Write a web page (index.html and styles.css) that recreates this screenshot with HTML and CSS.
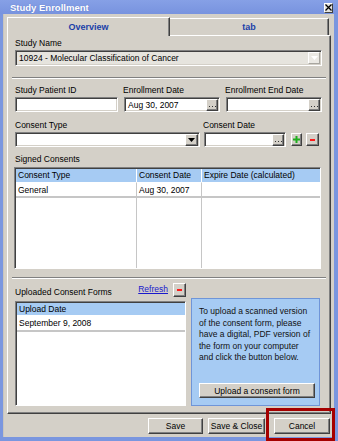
FILE: index.html
```html
<!DOCTYPE html>
<html>
<head>
<meta charset="utf-8">
<title>Study Enrollment</title>
<link rel="stylesheet" href="styles.css">
</head>
<body>
<div class="window">
  <div class="titlebar">
    <span class="title">Study Enrollment</span>
    <span class="close"><svg width="7" height="7" viewBox="0 0 7 7"><path d="M0.5 0.5 L6.5 6.5 M6.5 0.5 L0.5 6.5" stroke="#000" stroke-width="1.3"/></svg></span>
  </div>
  <div class="client">
    <div class="tabs">
      <div class="tab tab-active">Overview</div>
      <div class="tab tab-other">tab</div>
    </div>
    <div class="panel">
      <div class="label">Study Name</div>
      <div class="field-box select disabled">
        <span class="value">10924 - Molecular Classification of Cancer</span>
        <span class="drop drop-disabled"><svg width="7" height="4" viewBox="0 0 7 4"><path d="M0 0 H7 L3.5 4 Z" fill="#fff"/></svg></span>
      </div>
      <div class="sep sep-top"></div>

      <div class="row row-dates">
        <div class="field f-pid">
          <div class="label">Study Patient ID</div>
          <div class="field-box"></div>
        </div>
        <div class="field f-date">
          <div class="label">Enrollment Date</div>
          <div class="field-box"><span class="value">Aug 30, 2007</span><span class="dots"><svg width="7" height="1" viewBox="0 0 7 1"><rect x="0" width="1" height="1" fill="#333"/><rect x="3" width="1" height="1" fill="#333"/><rect x="6" width="1" height="1" fill="#333"/></svg></span></div>
        </div>
        <div class="field f-date">
          <div class="label">Enrollment End Date</div>
          <div class="field-box"><span class="value"></span><span class="dots"><svg width="7" height="1" viewBox="0 0 7 1"><rect x="0" width="1" height="1" fill="#333"/><rect x="3" width="1" height="1" fill="#333"/><rect x="6" width="1" height="1" fill="#333"/></svg></span></div>
        </div>
      </div>

      <div class="row row-consent">
        <div class="field f-ctype">
          <div class="label">Consent Type</div>
          <div class="field-box"><span class="value"></span><span class="drop"><svg width="7" height="4" viewBox="0 0 7 4"><path d="M0 0 H7 L3.5 4 Z" fill="#000"/></svg></span></div>
        </div>
        <div class="field f-cdate">
          <div class="label">Consent Date</div>
          <div class="field-box"><span class="value"></span><span class="dots"><svg width="7" height="1" viewBox="0 0 7 1"><rect x="0" width="1" height="1" fill="#333"/><rect x="3" width="1" height="1" fill="#333"/><rect x="6" width="1" height="1" fill="#333"/></svg></span></div>
        </div>
        <div class="mini mini-plus"><svg width="7" height="7" viewBox="0 0 7 7"><path d="M3.5 0 V7 M0 3.5 H7" stroke="#1fae1f" stroke-width="2"/></svg></div>
        <div class="mini mini-minus"><svg width="5" height="2" viewBox="0 0 5 2"><rect width="5" height="2" fill="#ff1a1a"/></svg></div>
      </div>

      <div class="label label-signed">Signed Consents</div>
      <div class="grid-table">
        <div class="th">Consent Type</div>
        <div class="th">Consent Date</div>
        <div class="th th-last">Expire Date (calculated)</div>
        <div class="td">General</div>
        <div class="td">Aug 30, 2007</div>
        <div class="td td-last"></div>
        <div class="tf"></div>
        <div class="tf"></div>
        <div class="tf tf-last"></div>
      </div>
      <div class="sep sep-mid"></div>

      <div class="uploads">
        <div class="uploads-left">
          <div class="uploads-head">
            <span class="uploads-label">Uploaded Consent Forms</span>
            <a class="refresh" href="#">Refresh</a>
            <div class="mini mini-minus mini-up"><svg width="5" height="2" viewBox="0 0 5 2"><rect width="5" height="2" fill="#ff1a1a"/></svg></div>
          </div>
          <div class="list">
            <div class="list-head">Upload Date</div>
            <div class="list-row">September 9, 2008</div>
          </div>
        </div>
        <div class="info">
          <p class="info-text">To upload a scanned version<br>of the consent form, please<br>have a digital, PDF version of<br>the form on your computer<br>and click the button below.</p>
          <div class="btn btn-upload">Upload a consent form</div>
        </div>
      </div>
    </div>

    <div class="actions">
      <div class="btn btn-save">Save</div>
      <div class="btn btn-saveclose">Save &amp; Close</div>
      <div class="btn btn-cancel">Cancel</div>
    </div>
  </div>
  <div class="highlight"></div>
</div>
</body>
</html>
```

FILE: styles.css
```css
* { box-sizing: border-box; }
html, body { margin: 0; padding: 0; }
body {
  width: 338px;
  height: 441px;
  overflow: hidden;
  font-family: "Liberation Sans", Arial, sans-serif;
  font-size: 8.5px;
  color: #000;
  background: #7a96df;
}
.window {
  position: relative;
  width: 338px;
  height: 441px;
  background: #7a96df;
  display: flex;
  flex-direction: column;
}
.titlebar {
  height: 14px;
  display: flex;
  align-items: center;
  padding: 0 5px 0 10px;
  color: #fff;
  font-weight: bold;
  font-size: 9.5px;
  background: linear-gradient(#86a0e6, #7893df);
}
.title { flex: 1; text-shadow: 0 0 1px #5a74c4; }
.close {
  width: 9px;
  height: 10px;
  margin-top: 1px;
  background: #e4e2dc;
  border: 1px solid;
  border-color: #fff #404040 #404040 #fff;
  display: flex;
  align-items: center;
  justify-content: center;
}
.client {
  flex: 1;
  margin: 0 4px 4px 3px;
  background: #d4d0c8;
  padding: 3px 3px 3px 4px;
  display: flex;
  flex-direction: column;
  box-shadow: inset 1px 0 #c9c5bd;
}
.tabs {
  display: flex;
  height: 18px;
}
.tab {
  display: flex;
  align-items: center;
  justify-content: center;
  font-weight: bold;
  font-size: 9px;
  color: #1a3fa8;
  background: #d4d0c8;
  border-top: 1px solid #fff;
  border-right: 1px solid #404040;
  box-shadow: inset -1px 0 #808080;
}
.tab-active {
  width: 163px;
  height: 19px;
  border-left: 1px solid #fff;
  position: relative;
  z-index: 1;
}
.tab-other {
  width: 159px;
  margin-top: 1px;
  height: 17px;
}
.panel {
  height: 379px;
  border: 1px solid;
  border-color: #fff #404040 #404040 #fff;
  box-shadow: inset -1px -1px #808080;
  padding: 2px 8px 7px 7px;
  display: flex;
  flex-direction: column;
}
.label {
  height: 10px;
  line-height: 10px;
  white-space: nowrap;
}
.field-box {
  height: 15px;
  background: #fff;
  border: 1px solid;
  border-color: #808080 #fff #fff #808080;
  box-shadow: inset 1px 1px #404040, inset -1px -1px #d4d0c8;
  display: flex;
  align-items: center;
  padding: 1px 1px 1px 2px;
}
.field-box .value {
  flex: 1;
  white-space: nowrap;
  overflow: hidden;
  padding-left: 1px;
}
.select {
  margin-top: 2px;
  height: 16px;
}
.select.disabled { background: #e6e4de; }
.drop {
  width: 13px;
  height: 12px;
  background: #d4d0c8;
  border: 1px solid;
  border-color: #fff #404040 #404040 #fff;
  box-shadow: inset -1px -1px #808080;
  display: flex;
  align-items: center;
  justify-content: center;
}
.drop-disabled {
  background: #ebe9e4;
  border-color: #fff #a8a6a0 #a8a6a0 #fff;
  box-shadow: none;
  width: 12px;
}
.dots {
  width: 12px;
  height: 12px;
  background: #d4d0c8;
  border: 1px solid;
  border-color: #fff #404040 #404040 #fff;
  box-shadow: inset -1px -1px #808080;
  display: flex;
  align-items: flex-end;
  justify-content: center;
  padding-bottom: 3px;
}
.dots svg { display: block; }
.sep {
  height: 2px;
  border-top: 1px solid #808080;
  border-bottom: 1px solid #fff;
  margin-left: -3px;
  margin-right: -4px;
}
.sep-top { margin-top: 11px; }
.sep-mid { margin-top: 8px; }
.row {
  display: flex;
  align-items: flex-end;
}
.row-dates { margin-top: 6px; gap: 6px; }
.row-consent { margin-top: 8px; }
.field {
  display: flex;
  flex-direction: column;
  gap: 2px;
}
.f-pid { width: 103px; }
.f-date { width: 96px; }
.f-date .label { margin-left: -1px; }
.f-ctype { width: 185px; }
.f-cdate { width: 82px; margin-left: 4px; }
.f-cdate .label { margin-left: -1px; }
.mini {
  height: 13px;
  margin-bottom: 1px;
  background: #d4d0c8;
  border: 1px solid;
  border-color: #fff #404040 #404040 #fff;
  box-shadow: inset -1px -1px #808080;
  display: flex;
  align-items: center;
  justify-content: center;
}
.mini-plus { width: 11px; margin-left: 5px; }
.mini-minus { width: 13px; margin-left: 4px; }
.label-signed { margin-top: 7px; }
.grid-table {
  margin-top: 3px;
  margin-left: -1px;
  width: 307px;
  height: 102px;
  background: #fff;
  border: 1px solid;
  border-color: #808080 #fff #fff #808080;
  box-shadow: inset 1px 1px #404040;
  padding: 1px 0 0 1px;
  display: grid;
  grid-template-columns: 121px 65px 1fr;
  grid-template-rows: 13px 16px 1fr;
}
.th {
  background: #a6cbf3;
  border-right: 1px solid #fff;
  padding-left: 2px;
  line-height: 13px;
  white-space: nowrap;
  overflow: hidden;
}
.td {
  padding-left: 2px;
  line-height: 15px;
  border-right: 1px solid #c6c6c6;
  border-bottom: 2px solid #c6c6c6;
  border-top: 1px solid #fff;
  white-space: nowrap;
}
.tf { border-right: 1px solid #c6c6c6; }
.th-last, .td-last, .tf-last { border-right: 0; }
.uploads {
  margin-top: 4px;
  flex: 1;
  display: flex;
}
.uploads-left {
  width: 171px;
  display: flex;
  flex-direction: column;
}
.uploads-head {
  height: 14px;
  display: flex;
  align-items: flex-end;
}
.uploads-label { flex: 1; line-height: 10px; margin-bottom: 0; }
.refresh {
  color: #1a1acc;
  text-decoration: underline;
  line-height: 10px;
  margin-bottom: 3px;
}
.mini-up { margin-left: 5px; height: 14px; margin-bottom: 0; }
.list {
  margin-top: 4px;
  flex: 1;
  background: #fff;
  border: 1px solid;
  border-color: #808080 #fff #fff #808080;
  box-shadow: inset 1px 1px #404040;
  padding: 1px 0 0 1px;
}
.list-head {
  background: #a6cbf3;
  height: 12px;
  line-height: 12px;
  padding-left: 2px;
}
.list-row {
  height: 17px;
  line-height: 15px;
  padding-left: 2px;
  border-top: 1px solid #fff;
  border-bottom: 2px solid #c6c6c6;
}
.info {
  margin-left: 5px;
  margin-top: 15px;
  width: 129px;
  background: #a6cbf3;
  border: 1px solid #6f95d8;
  padding: 7px 5px 7px 7px;
  display: flex;
  flex-direction: column;
}
.info-text {
  margin: 0;
  line-height: 11.5px;
  white-space: nowrap;
  color: #111;
}
.btn {
  background: #d4d0c8;
  border: 1px solid;
  border-color: #fff #404040 #404040 #fff;
  box-shadow: inset -1px -1px #808080;
  display: flex;
  align-items: center;
  justify-content: center;
  white-space: nowrap;
}
.btn-upload {
  margin-top: auto;
  height: 15px;
  width: 116px;
}
.actions {
  margin-top: 4px;
  height: 16px;
  display: flex;
  justify-content: flex-end;
}
.btn-save { width: 55px; margin-right: 5px; }
.btn-saveclose { width: 57px; margin-right: 9px; }
.btn-cancel { width: 56px; margin-right: 1px; }
.highlight {
  position: absolute;
  left: 266px;
  top: 408px;
  width: 69px;
  height: 33px;
  border: 3px solid #a50000;
  pointer-events: none;
}
```
